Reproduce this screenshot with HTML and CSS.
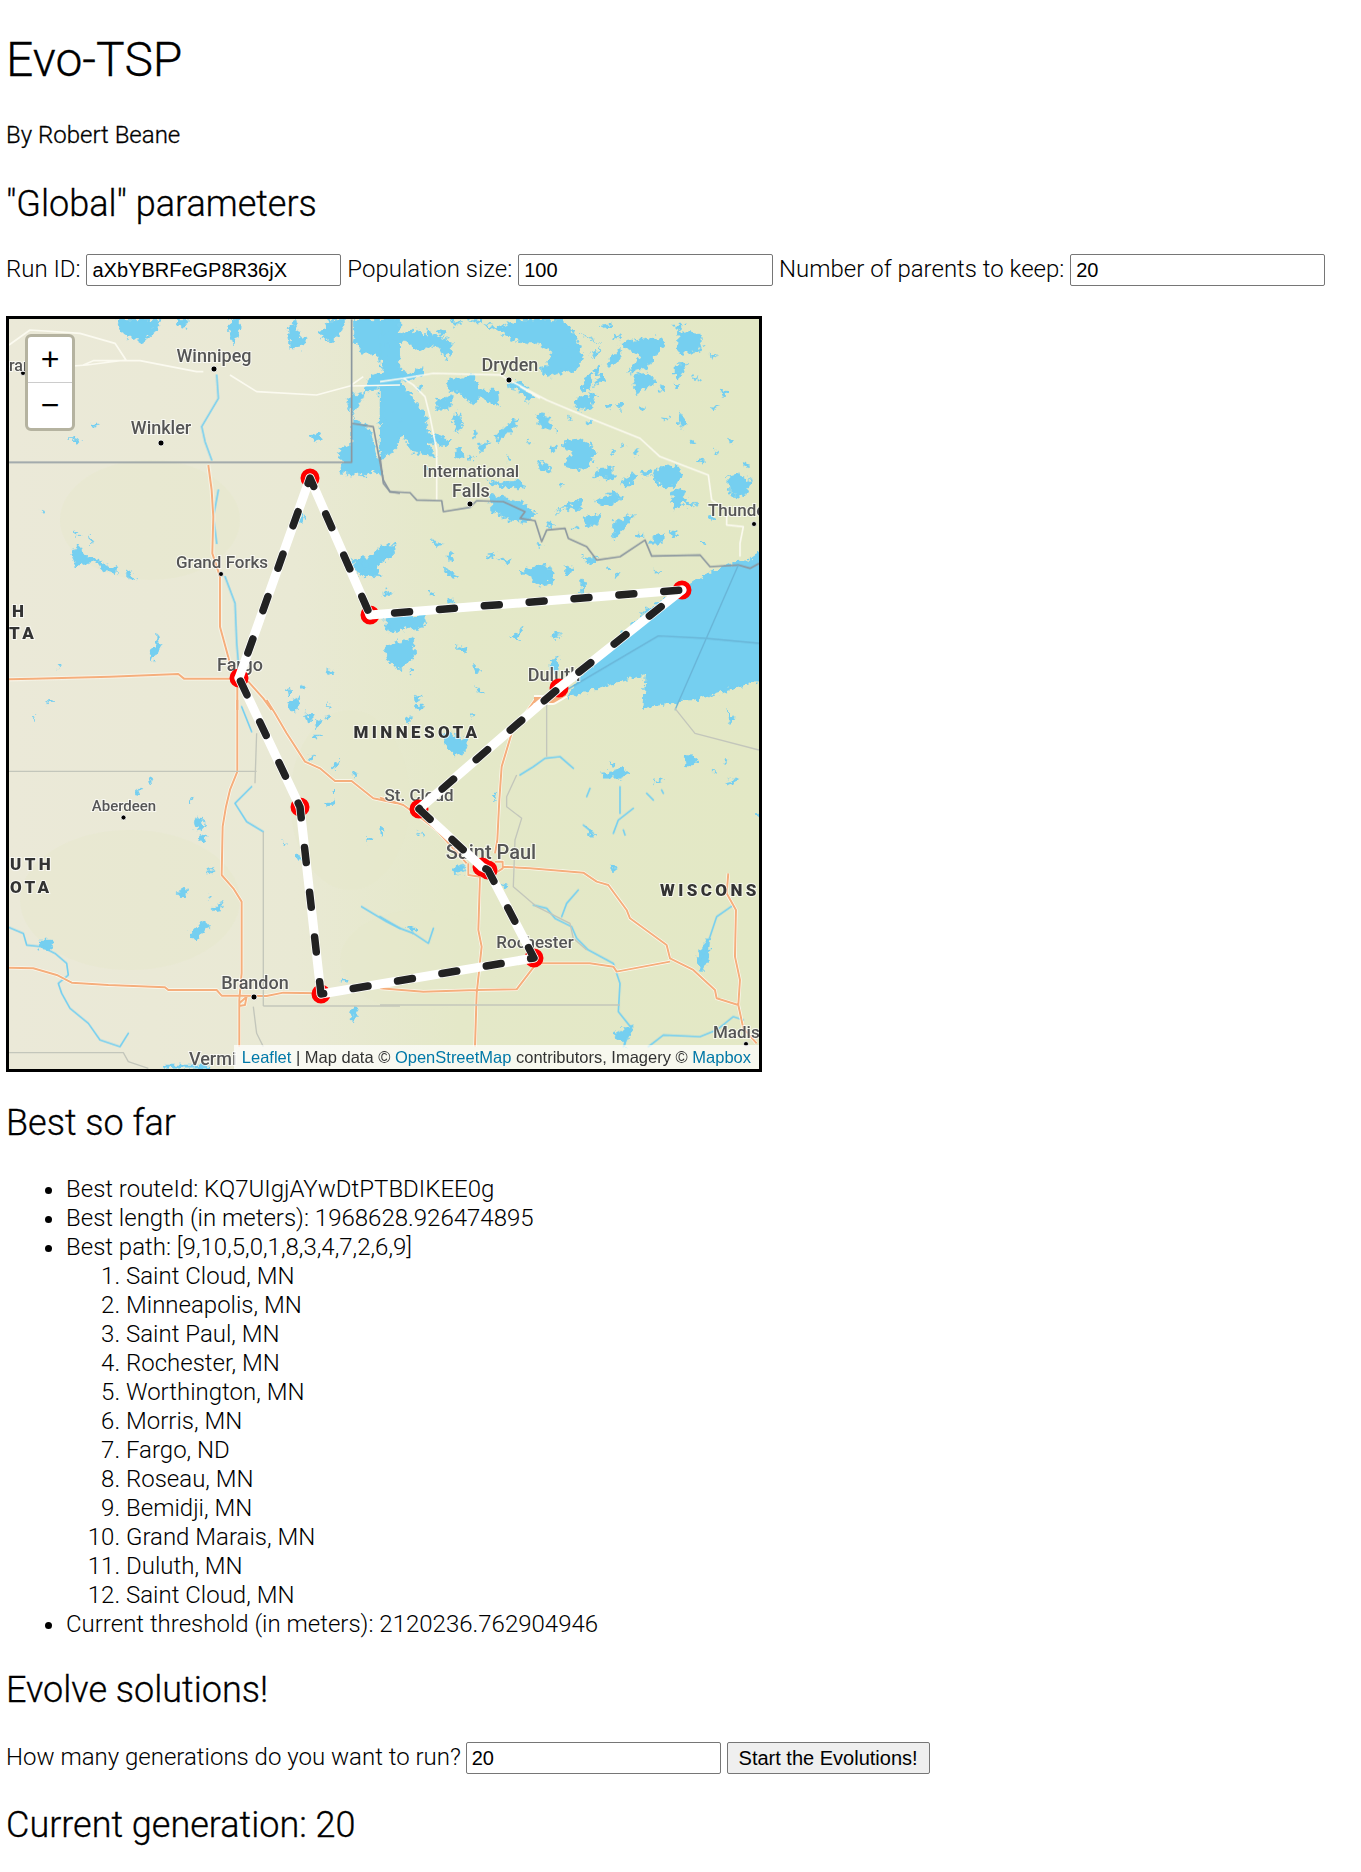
FILE: index.html
```html
<!DOCTYPE html>
<html lang="en">
<head>
<meta charset="utf-8">
<title>Evo-TSP</title>
<link rel="stylesheet" href="styles.css">
</head>
<body>
<h1>Evo-TSP</h1>
<p class="byline">By Robert Beane</p>
<h2 class="h-global">"Global" parameters</h2>
<div class="params">
  <label>Run ID: <input type="text" value="aXbYBRFeGP8R36jX"></label>
  <label>Population size: <input type="text" value="100"></label>
  <label>Number of parents to keep: <input type="text" value="20"></label>
</div>
<div class="map">
  <svg class="tiles" viewBox="9 319 750 750" width="750" height="750" xmlns="http://www.w3.org/2000/svg">
    <defs>
      <linearGradient id="land" x1="0" x2="1" y1="0" y2="0">
        <stop offset="0" stop-color="#ebe9d8"/>
        <stop offset=".38" stop-color="#e9e9d4"/>
        <stop offset=".6" stop-color="#e4e8c8"/>
        <stop offset="1" stop-color="#e3e8c5"/>
      </linearGradient>
      <filter id="rough" filterUnits="userSpaceOnUse" x="0" y="310" width="770" height="770">
        <feTurbulence type="fractalNoise" baseFrequency=".2" numOctaves="2" seed="4" result="n"/>
        <feDisplacementMap in="SourceGraphic" in2="n" scale="10" xChannelSelector="R" yChannelSelector="G"/>
        <feGaussianBlur stdDeviation=".3"/>
      </filter>
      <g id="roads">
        <path transform="translate(0 310) scale(.3333)" d="M27 1108L100 1106 330 1100 535 1092 552 1106 690 1106 745 1115 790 1165 815 1200M625 465L635 540 640 620 637 730 660 800 660 950 690 1060 712 1106 712 1200"/>
        <path transform="translate(0 700) scale(.3333)" d="M712 0L712 215 690 270 678 320 668 380 665 525 700 565 725 605 725 820 718 900 718 1040M800 0L825 40 860 100 915 185 960 205 1005 243 1055 243 1120 295 1190 310M27 803L100 805 170 825 215 848 325 855 495 862 505 870 650 870 665 887 725 887 800 888 850 878 960 880M718 910L740 890 735 915 718 918"/>
        <path transform="translate(380 700) scale(.3333)" d="M0 293L70 315 105 340 170 390 260 490M465 0L395 100 365 200 358 300 352 420 345 460M265 490L265 525 300 530 345 520 368 505 368 485 345 485M300 530L295 690 305 740 290 880 285 1040M368 500L450 505 610 518 650 545 685 555 740 630 750 655 860 735 870 775 940 810 1005 870 1010 895 1075 915 1080 840 1065 770 1068 630 1040 580 1045 520M462 790L550 790 630 790 700 800 710 815 870 785M462 800L410 868 290 870 130 875 0 865M1075 915L1090 985 1130 1030"/>
        <path d="M534 700L553 700 565 693"/>
      </g>
    </defs>
    <rect x="9" y="319" width="750" height="750" fill="url(#land)"/>
    <g class="haze">
      <ellipse cx="150" cy="520" rx="90" ry="60"/>
      <ellipse cx="130" cy="900" rx="110" ry="70"/>
      <ellipse cx="420" cy="960" rx="80" ry="50"/>
      <ellipse cx="350" cy="800" rx="60" ry="90"/>
    </g>

    <g filter="url(#rough)">
    <!-- water: north-west -->
    <g class="water" transform="translate(0 310) scale(.3333)">
      <path d="M348 28L480 28 470 60 430 96 385 82 355 55ZM528 28L565 28 552 55 535 48ZM692 28L720 28 716 70 700 105 688 60ZM865 60L885 30 900 80 925 90 905 110 870 120ZM960 80L985 28 1040 28 1020 70 990 95ZM1060 28L1200 28 1200 215 1120 240 1060 255 1040 270 1060 330 1095 340 1110 360 1150 500 1120 480 1100 495 1020 490 1030 462 1012 425 1055 400 1055 320 1090 260 1110 200 1150 180 1130 130 1090 130 1060 90ZM928 378L960 370 968 385 945 397ZM205 382L245 395 235 400ZM275 345L300 345 285 350 280 360ZM120 600L138 605 130 612ZM225 662L240 670 230 680ZM268 675L278 685 272 705ZM212 735L235 705 250 735 290 745 320 765 350 775 348 795 315 785 290 755 245 765 225 765ZM378 790L392 785 405 812 385 805ZM470 970L482 1010 455 1060 450 1025 470 1010ZM175 1060L185 1065 175 1075ZM145 1165L162 1178 140 1178ZM1055 750L1110 740 1160 702 1190 705 1180 735 1130 770 1140 800 1085 800 1065 775ZM1090 755L1110 770 1090 780ZM1155 845L1175 855 1155 860ZM1155 925L1195 915 1195 950 1170 970 1155 945ZM1150 1020L1200 1000 1200 1060 1175 1050ZM985 1080L1000 1085 990 1095ZM860 1135L880 1145 865 1160ZM905 1125L920 1130 910 1140ZM860 1180L900 1160 895 1200 870 1200Z"/>
      <path d="M898 620L915 615 908 640 890 640ZM1163 840L1173 850 1160 855Z"/>
    </g>
    <!-- water: north-east -->
    <g class="water" transform="translate(380 310) scale(.3333)">
      <path d="M0 28L45 28 65 70 120 60 160 100 120 125 75 95 40 90 15 70 0 85ZM0 100L30 105 20 160 0 175ZM55 180L90 190 125 170 130 195 85 215 60 205ZM0 215L60 215 90 255 140 320 140 355 170 400 140 400 165 440 100 430 65 375 35 430 0 450ZM10 290L60 330 50 360 15 335ZM140 60L220 100 200 150 180 115 145 100ZM260 30L290 28 330 60 420 28 540 28 580 60 610 140 590 180 500 200 480 180 540 140 480 100 400 90 340 50ZM510 130L570 110 580 170 500 190ZM200 210L280 195 300 240 350 240 355 290 300 260 280 285 240 250 205 240ZM110 225L130 235 115 245ZM385 215L420 215 460 255 445 280 420 240 390 235ZM170 270L215 260 210 295 170 300ZM230 300L250 340 230 370 220 330ZM280 365L295 370 285 385ZM160 370L215 395 190 410 160 400ZM345 380L375 350 415 320 405 350 370 385 355 395ZM295 400L330 395 300 430ZM225 420L245 410 250 440 230 445ZM130 470L150 475 135 480ZM265 435L285 440 270 450ZM470 310L505 315 515 360 480 350ZM525 350L535 365 530 370ZM385 440L395 445 385 455ZM320 510L360 520 420 510 435 535 360 530 330 520ZM330 550L385 570 420 575 470 610 445 635 380 630 335 600ZM720 100L760 90 830 80 855 100 800 175 740 190 780 140ZM895 60L960 70 970 115 925 130 890 130ZM630 130L665 115 640 145ZM600 70L660 100 625 80ZM680 160L720 115 725 145 690 170ZM620 190L640 190 630 240 605 240ZM660 190L680 210 640 230ZM760 195L800 190 830 215 770 250ZM880 220L900 222 890 235ZM885 165L920 160 895 205 885 195ZM590 265L650 250 630 300 585 295ZM680 280L695 285 685 300ZM710 280L730 285 720 300ZM1020 240L1045 245 1030 260ZM845 320L870 325 850 330ZM900 305L925 340 905 355 895 330ZM990 290L1015 290 1000 300ZM565 315L580 325 570 330ZM620 330L635 335 625 345ZM725 400L735 410 725 415ZM545 400L590 385 625 400 650 430 620 470 600 480 550 465 575 430ZM660 475L700 470 700 510 640 500ZM510 405L530 415 515 425ZM475 450L515 470 495 490 470 470ZM820 480L890 465 910 490 885 530 845 530 815 500ZM780 490L810 480 800 505ZM735 505L765 490 760 525 725 525ZM530 520L555 525 540 530ZM645 570L705 545 725 565 690 590 650 580ZM875 545L905 530 920 575 880 600ZM910 580L955 580 920 590ZM1045 500L1075 490 1115 515 1090 560 1050 555ZM950 445L975 450 960 460ZM1045 385L1060 390 1050 400ZM520 610L555 590 600 565 605 600 555 595 530 605ZM610 625L670 610 650 640 620 655ZM700 635L765 610 740 650 700 690ZM580 650L600 655 590 660ZM870 660L895 670 880 680ZM820 680L850 665 850 700 810 700ZM960 695L985 700 970 705ZM765 675L790 675 775 685ZM0 705L45 710 30 735 0 745ZM420 785L500 760 525 810 490 830 445 800ZM555 770L580 775 560 800ZM350 745L395 750 380 760ZM320 735L345 730 335 745ZM600 800L620 820 605 850ZM815 780L850 785 825 790ZM610 740L650 745 630 765ZM680 770L695 775 680 785ZM710 785L720 790 705 800ZM35 915L100 905 100 945 50 965 25 945ZM85 920L140 915 130 950 100 960ZM15 1010L100 980 105 1040 60 1080 20 1050ZM225 1005L260 1015 250 1030ZM520 970L540 975 525 990ZM510 1050L535 1045 530 1090 510 1080ZM90 1075L105 1085 90 1095ZM290 1130L310 1145 295 1150ZM100 1155L125 1165 105 1175Z"/>
      <path d="M170 60L200 65 185 80ZM215 30L245 35 225 50ZM660 45L700 40 680 60ZM700 70L720 75 705 85ZM880 45L915 45 895 60ZM640 180L660 165 650 195ZM840 230L860 235 845 245ZM990 130L1010 135 995 145ZM940 200L960 205 945 215ZM780 290L800 295 785 305ZM440 390L460 395 445 405ZM760 420L780 425 765 440ZM690 420L710 425 695 435ZM930 390L950 395 935 405ZM1000 420L1020 425 1005 435ZM1090 460L1110 465 1095 475ZM990 620L1010 625 995 635ZM500 640L525 645 505 655ZM470 700L490 705 475 715ZM150 690L190 700 170 710ZM205 720L220 745 210 760ZM190 775L230 800 215 805ZM150 840L165 850 150 855ZM200 860L220 870 205 880ZM395 980L430 950 415 990ZM280 1060L300 1080 285 1085Z"/>
    </g>
    <path class="water" d="M765 548L748 562 733 563 697 580 682 590 647 610 620 637 580 677 567 697 613 683 647 673 643 707 700 698 765 678Z"/>
    <!-- water: south -->
    <g class="water" transform="translate(0 700) scale(.3333)">
      <path d="M875 5L895 30 880 35ZM915 35L945 45 925 70ZM945 65L970 60 950 90ZM980 5L995 25 985 25ZM970 50L990 45 980 60ZM940 105L965 105 950 115ZM100 50L108 50 100 65ZM445 235L462 245 450 255ZM410 265L425 265 420 285 405 280ZM570 295L580 295 575 310ZM580 362L610 350 615 385 590 390ZM595 405L625 410 605 425 590 420ZM620 510L645 505 630 520ZM535 575L565 560 555 590 535 590ZM620 588L635 590 625 598ZM640 620L670 605 660 630 640 632ZM575 690L620 660 630 685 600 700 590 725 572 700ZM115 720L155 720 150 750 120 745ZM1000 265L1010 270 995 278ZM980 310L1005 300 1000 320 980 320ZM845 425L860 435 850 440ZM885 460L905 470 905 485ZM925 170L945 165 930 185ZM1000 190L1020 180 1000 210ZM1065 215L1075 215 1060 235ZM1100 410L1115 415 1100 425ZM1140 385L1155 395 1140 400ZM1060 920L1075 925 1060 965 1050 960ZM1030 835L1040 840 1030 845ZM495 1095L630 1095 630 1105 495 1105Z"/>
    </g>
    <g class="water" transform="translate(380 700) scale(.3333)">
      <path d="M190 100L230 105 260 120 255 160 220 165 195 135ZM105 15L130 15 115 40ZM75 55L95 50 85 70ZM270 45L290 42 280 52ZM215 505L255 495 250 520 220 525ZM360 550L385 555 375 565ZM0 385L15 395 0 400ZM115 395L135 405 125 410ZM330 285L350 285 345 300ZM85 680L110 685 100 700ZM690 495L715 505 700 515ZM665 215L690 215 720 205 750 220 720 235 670 235ZM695 185L708 190 700 200ZM915 165L955 170 935 195 920 195ZM1000 205L1010 215 1000 220ZM1035 175L1045 180 1035 195ZM1035 245L1075 235 1055 255ZM620 375L645 405 630 410ZM960 750L990 710 985 780 965 815 950 790ZM1040 30L1065 60 1050 75ZM820 240L860 235 825 250ZM1125 340L1137 340 1137 350ZM700 1000L760 980 735 1040Z"/>
    </g>
    </g>
    <g class="river" transform="translate(380 700) scale(.3333)">
      <path d="M420 225L460 200 495 175 540 170 580 205M620 290L630 265M720 260L720 340M760 325L715 360 700 400M735 405L730 390M610 375L640 400M545 650L560 610 595 570M460 615L500 625 525 655 575 680 590 715 625 750 700 790 720 850 715 935 755 985 730 1040M0 650L60 685 100 700 145 730 160 685M1060 615L1010 650 990 710 960 780M805 1040L850 1005 960 1010 1010 990 1060 950 1090 960M800 280L820 300M850 280L845 270"/>
    </g>
    <g class="river" transform="translate(0 700) scale(.3333)">
      <path d="M27 682L70 700 80 735 125 740 165 760 200 790 205 825 175 850 185 880 210 925 265 970 300 1020 360 1040 385 1000M725 20L755 95M705 310L755 260M705 310L740 365 790 395M1085 620L1160 665 1200 685"/>
    </g>
    <g class="river" transform="translate(0 310) scale(.3333)">
      <path d="M650 195L655 265 605 350 615 395 635 450M655 540L640 620 650 700M675 800L705 880 710 1000 715 1060"/>
    </g>
    <!-- minor white roads -->
    <g class="minor" transform="translate(0 310) scale(.3333)">
      <path d="M27 105L90 60 240 70 345 100 378 150 378 150 260 165 120 175 27 170M250 165L280 152 420 152 590 185 610 185M690 195L770 245 950 255 1050 228 1200 225M1050 228L1090 200"/>
    </g>
    <g class="minor" transform="translate(380 310) scale(.3333)">
      <path d="M0 215L70 205 100 225 135 260 150 320 170 420 170 570M70 205L160 190 360 195 500 270 630 325 780 385 840 440 985 495 995 570 1040 600 1040 645 1090 650 1080 700 1080 740M420 230L480 265"/>
    </g>
    <use href="#roads" class="road-halo"/>
    <use href="#roads" class="road"/>
    <!-- borders -->
    <g class="border">
      <path transform="translate(0 310) scale(.3333)" d="M27 457L1055 457 1055 28M1055 340L1120 350 1150 510 1170 545 1200 550"/>
      <path transform="translate(380 310) scale(.3333)" d="M0 440L10 520 30 545 90 548 110 570 185 572 190 605 270 592 290 572 370 575 435 605 420 625 465 632 485 695 500 660 555 655 565 685 620 710 650 750 720 740 795 690 815 738 960 735 990 770 1075 765 1110 775 1137 760"/>
    </g>
    <g class="lake-line">
      <path transform="translate(380 310) scale(.3333)" d="M1075 765L885 1200M1137 1000L975 985 835 978 560 1140"/>
    </g>
    <g class="border-light">
      <path transform="translate(0 700) scale(.3333)" d="M27 214L770 214M770 100L765 250M790 395L790 918M790 918L1200 918M27 1058L370 1058 385 1085 445 1105M760 920L770 1000 790 1040"/>
      <path transform="translate(380 700) scale(.3333)" d="M0 915L720 915M500 0L500 170M410 225L380 290 380 320 425 355 405 420 400 560 470 620 570 670 580 715 620 750M885 25L945 100 1137 150"/>
    </g>
    <!-- places -->
    <g class="places">
      <circle cx="214" cy="369" r="3"/><circle cx="161" cy="443" r="3"/><circle cx="23" cy="373" r="2.500"/>
      <circle cx="221" cy="574" r="2.500"/><circle cx="123.500" cy="817.500" r="2.500"/><circle cx="254" cy="997" r="3"/>
      <circle cx="509" cy="380" r="3"/><circle cx="470" cy="504" r="3"/><circle cx="754" cy="524" r="2.500"/><circle cx="746" cy="1044" r="2.500"/>
    </g>
    <g class="labels">
      <text x="9" y="371" class="start">ran</text>
      <text x="214" y="362" class="large">Winnipeg</text>
      <text x="161" y="434" class="large">Winkler</text>
      <text x="222" y="568" class="mid">Grand Forks</text>
      <text x="240" y="671" class="large">Fargo</text>
      <text x="510" y="371" class="large">Dryden</text>
      <text x="471" y="477" class="mid">International</text>
      <text x="471" y="497" class="large">Falls</text>
      <text x="708" y="516" class="mid start">Thunde</text>
      <text x="554" y="681" class="large">Duluth</text>
      <text x="419" y="801" class="mid">St. Cloud</text>
      <text x="491" y="859" class="big">Saint Paul</text>
      <text x="535" y="948" class="mid">Rochester</text>
      <text x="124" y="811" class="small">Aberdeen</text>
      <text x="255" y="989" class="large">Brandon</text>
      <text x="713" y="1038" class="mid start">Madis</text>
      <text x="189" y="1065" class="large start">Vermi</text>
      <text x="417" y="738" class="state">MINNESOTA</text>
      <text x="660" y="896" class="state start">WISCONS</text>
      <text x="12" y="617" class="state start">H</text>
      <text x="9" y="639" class="state start">TA</text>
      <text x="10" y="870" class="state start">UTH</text>
      <text x="10" y="893" class="state start">OTA</text>
    </g>
    <!-- tour -->
    <g class="stops">
      <circle cx="310" cy="478" r="7"/><circle cx="370" cy="615" r="7"/><circle cx="682" cy="590" r="7"/>
      <circle cx="559" cy="688" r="7"/><circle cx="419" cy="809" r="7"/><circle cx="482" cy="867" r="7"/>
      <circle cx="488" cy="870" r="7"/><circle cx="534" cy="958" r="7"/><circle cx="321" cy="994" r="7"/>
      <circle cx="300" cy="807" r="7"/><circle cx="239" cy="678" r="7"/>
    </g>
    <polyline class="tour-base" points="419,809 482,867 488,870 534,958 321,994 300,807 239,678 310,478 370,615 682,590 559,688 419,809"/>
    <polyline class="tour-dash" points="419,809 482,867 488,870 534,958 321,994 300,807 239,678 310,478 370,615 682,590 559,688 419,809"/>
  </svg>
  <div class="zoom">
    <a class="zoom-btn zoom-in">+</a>
    <a class="zoom-btn">&#x2212;</a>
  </div>
  <div class="attribution"><a>Leaflet</a> | Map data © <a>OpenStreetMap</a> contributors, Imagery © <a>Mapbox</a></div>
</div>
<h2 class="h-best">Best so far</h2>
<ul class="best">
  <li>Best routeId: KQ7UIgjAYwDtPTBDIKEE0g</li>
  <li>Best length (in meters): 1968628.926474895</li>
  <li>Best path: [9,10,5,0,1,8,3,4,7,2,6,9]
    <ol>
      <li>Saint Cloud, MN</li>
      <li>Minneapolis, MN</li>
      <li>Saint Paul, MN</li>
      <li>Rochester, MN</li>
      <li>Worthington, MN</li>
      <li>Morris, MN</li>
      <li>Fargo, ND</li>
      <li>Roseau, MN</li>
      <li>Bemidji, MN</li>
      <li>Grand Marais, MN</li>
      <li>Duluth, MN</li>
      <li>Saint Cloud, MN</li>
    </ol>
  </li>
  <li>Current threshold (in meters): 2120236.762904946</li>
</ul>
<h2 class="h-evolve">Evolve solutions!</h2>
<div class="evolve">
  <label>How many generations do you want to run? <input type="text" value="20"></label>
  <button type="button">Start the Evolutions!</button>
</div>
<h2 class="h-gen">Current generation: 20</h2>
</body>
</html>
```

FILE: styles.css
```css
html { background: #fff; }
body {
  margin: 0;
  padding: 0 6px;
  font-family: Roboto, "Liberation Sans", sans-serif;
  font-weight: 300;
  font-size: 24px;
  line-height: 29px;
  color: #000;
  overflow-x: hidden;
}
h1 { margin: 32px 0 0; font-size: 48px; line-height: 56px; font-weight: 300; -webkit-text-stroke: .3px #000; }
.byline { margin: 33px 0 0; font-weight: 300; line-height: 29px; -webkit-text-stroke: .3px #000; }
h2 { margin: 0; font-size: 36px; line-height: 42px; font-weight: 300; -webkit-text-stroke: .3px #000; }
.h-global { margin-top: 33px; }
.params { margin-top: 29px; white-space: nowrap; height: 33px; }
input {
  width: 255px;
  height: 32px;
  box-sizing: border-box;
  font-family: "Liberation Sans", Arial, sans-serif;
  font-size: 20px;
  font-weight: 400;
  padding: 1px 5px;
  border: 1px solid #767676;
  border-radius: 2px;
  vertical-align: baseline;
  color: #000;
}
.map {
  position: relative;
  width: 750px;
  height: 750px;
  border: 3px solid #000;
  margin-top: 29px;
  overflow: hidden;
}
.tiles { display: block; }
.haze ellipse { fill: #e6e7c9; opacity: .35; }
.water path, path.water { fill: #75cff0; stroke: #75cff0; stroke-width: 1.5; stroke-linejoin: round; }
.river path { fill: none; stroke: #75cff0; stroke-width: 5; stroke-linejoin: round; stroke-linecap: round; }
.minor path { fill: none; stroke: #fbfaf0; stroke-width: 5; stroke-linejoin: round; }
.road-halo { fill: none; stroke: #fdfbf2; stroke-width: 10; stroke-linejoin: round; }
.road { fill: none; stroke: #f5ae7c; stroke-width: 6; stroke-linejoin: round; }
.border path { fill: none; stroke: #8c979f; stroke-width: 5; stroke-linejoin: round; }
.lake-line path { fill: none; stroke: #69b4d6; stroke-width: 4; stroke-linejoin: round; }
.border-light path { fill: none; stroke: #c3c6bb; stroke-width: 4; stroke-linejoin: round; }
.places circle { fill: #000; stroke: #fff; stroke-width: .8; }
.labels text {
  font-family: Roboto, "Liberation Sans", sans-serif;
  font-size: 16px;
  font-weight: 500;
  fill: #555;
  text-anchor: middle;
  stroke: rgba(255, 255, 255, .7);
  stroke-width: 2px;
  paint-order: stroke;
}
.labels text.mid { font-size: 17px; }
.labels text.large { font-size: 18px; }
.labels text.big { font-size: 20px; }
.labels text.small { font-size: 15px; }
.labels text.state {
  font-size: 17px;
  font-weight: 900;
  fill: #333;
  letter-spacing: 3.4px;
}
.labels text.start { text-anchor: start; }
.stops circle { fill: none; stroke: #f00; stroke-width: 5; }
.tour-base { fill: none; stroke: #fff; stroke-width: 9; stroke-linejoin: round; stroke-linecap: round; }
.tour-dash { fill: none; stroke: #222; stroke-width: 7.5; stroke-linejoin: round; stroke-linecap: round; stroke-dasharray: 15 30; }
.zoom {
  position: absolute;
  top: 15px;
  left: 16px;
  width: 44px;
  border: 3px solid #b5b3a0;
  border-radius: 6px;
  background: #fff;
}
.zoom-btn {
  display: block;
  height: 45px;
  line-height: 45px;
  text-align: center;
  font-family: "Liberation Sans", Arial, sans-serif;
  font-weight: 400;
  font-size: 32px;
  color: #000;
}
.zoom-in { border-bottom: 1px solid #ccc; }
.attribution {
  position: absolute;
  right: 0;
  bottom: 0;
  padding: 0 8px;
  height: 24px;
  line-height: 24px;
  background: rgba(255, 255, 255, .7);
  font-family: "Liberation Sans", Arial, sans-serif;
  font-size: 16.500px;
  font-weight: 400;
  color: #333;
  white-space: nowrap;
}
.attribution a { color: #0078a8; }
.h-best { margin-top: 30px; }
.best { margin: 31px 0 0; padding: 0 0 0 60px; }
.best ol { margin: 0; padding: 0 0 0 60px; }
.h-evolve { margin-top: 30px; }
.evolve { margin-top: 31px; white-space: nowrap; height: 33px; }
.evolve input { margin-left: -1px; }
button {
  height: 32px;
  box-sizing: border-box;
  font-family: "Liberation Sans", Arial, sans-serif;
  font-size: 20px;
  font-weight: 400;
  padding: 1px 11px;
  margin-left: 0;
  border: 1px solid #767676;
  border-radius: 2px;
  background: #efefef;
  color: #000;
}
.h-gen { margin-top: 29px; }
```
